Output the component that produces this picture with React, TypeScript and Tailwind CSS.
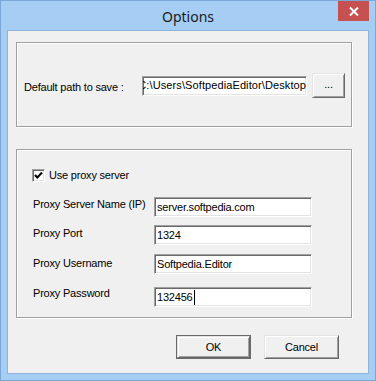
const ui = "font-['Liberation_Sans',Arial,sans-serif] text-[11px] tracking-[-0.2px] text-black"

function Sunken({ className = "", children }: { className?: string; children?: React.ReactNode }) {
  return (
    <div
      className={
        "h-[20px] bg-white border border-t-[#a0a0a0] border-l-[#a0a0a0] border-b-white border-r-white shadow-[inset_1px_1px_0_#696969,inset_-1px_-1px_0_#e3e3e3] flex items-center overflow-hidden whitespace-nowrap px-[2px] " +
        className
      }
    >
      {children}
    </div>
  )
}

function Raised({ className = "", children }: { className?: string; children?: React.ReactNode }) {
  return (
    <div
      className={
        "flex items-center justify-center bg-[#f0f0f0] border border-t-[#e3e3e3] border-l-[#e3e3e3] border-b-[#696969] border-r-[#696969] shadow-[inset_1px_1px_0_#fff,inset_-1px_-1px_0_#a0a0a0] " +
        className
      }
    >
      {children}
    </div>
  )
}

const rows = [
  { label: "Proxy Server Name (IP)", value: "server.softpedia.com", mt: "mt-[15px]", pt: "pt-[1px]" },
  { label: "Proxy Port", value: "1324", mt: "mt-[8px]", pt: "pt-[2px]" },
  { label: "Proxy Username", value: "Softpedia.Editor", mt: "mt-[9px]", pt: "pt-[3px]" },
  { label: "Proxy Password", value: "132456", mt: "mt-[13px]", pt: "pt-0", caret: true },
]

export default function App() {
  return (
    <div className={"w-[376px] h-[381px] bg-[#a6cdf4] border border-[#7ba7d7] flex flex-col " + ui}>
      <div className="relative h-[29px] flex items-center justify-center">
        <span className="font-['Noto_Sans','Open_Sans',sans-serif] text-[14px] tracking-normal text-[#1a1a1a] pt-[1px]">
          Options
        </span>
        <div className="absolute right-[6px] top-0 w-[31px] h-[20px] bg-[#c75050] flex items-center justify-center">
          <svg width="10" height="9" viewBox="0 0 10 9">
            <path d="M1 0.5 L9 8.5 M9 0.5 L1 8.5" stroke="#fff" strokeWidth="2" />
          </svg>
        </div>
      </div>

      <div className="mx-[6px] h-[344px] border border-[#8fb3d9] bg-[#f0f0f0] flex flex-col px-[8px] pt-[11px]">
        <div className="w-[336px] h-[85px] border border-[#a0a0a0] shadow-[inset_1px_1px_0_#fff,1px_1px_0_#fff] flex items-center pl-[7px] pt-[2px]">
          <span className="w-[118px] pt-[3px]">Default path to save :</span>
          <Sunken className="w-[165px] justify-end pr-0">
            <span className="tracking-[0.1px]">C:\Users\SoftpediaEditor\Desktop</span>
          </Sunken>
          <Raised className="ml-[5px] w-[33px] h-[25px] pb-[3px]">...</Raised>
        </div>

        <div className="mt-[22px] w-[336px] h-[169px] border border-[#a0a0a0] shadow-[inset_1px_1px_0_#fff,1px_1px_0_#fff] flex flex-col pt-[19px] pl-[15px]">
          <div className="flex items-center h-[13px]">
            <div className="w-[13px] h-[13px] bg-white border border-t-[#a0a0a0] border-l-[#a0a0a0] border-b-white border-r-white shadow-[inset_1px_1px_0_#696969,inset_-1px_-1px_0_#e3e3e3] flex items-center justify-center">
              <svg width="9" height="9" viewBox="0 0 9 9">
                <path d="M1 4 L3.3 6.5 L8 1.5" fill="none" stroke="#000" strokeWidth="2" />
              </svg>
            </div>
            <span className="ml-[4px]">Use proxy server</span>
          </div>

          {rows.map((r) => (
            <div key={r.label} className={"flex items-start " + r.mt}>
              <span className={"ml-[1px] w-[121px] leading-[13px] " + r.pt}>{r.label}</span>
              <Sunken className="w-[158px]">
                <span>{r.value}</span>
                {r.caret && <span className="ml-[1px] w-px h-[15px] bg-black" />}
              </Sunken>
            </div>
          ))}
        </div>

        <div className="mt-[17px] flex pl-[160px] gap-[13px]">
          <div className="border border-[#696969]">
            <Raised className="w-[73px] h-[22px]">OK</Raised>
          </div>
          <Raised className="w-[75px] h-[24px]">Cancel</Raised>
        </div>
      </div>
    </div>
  )
}
